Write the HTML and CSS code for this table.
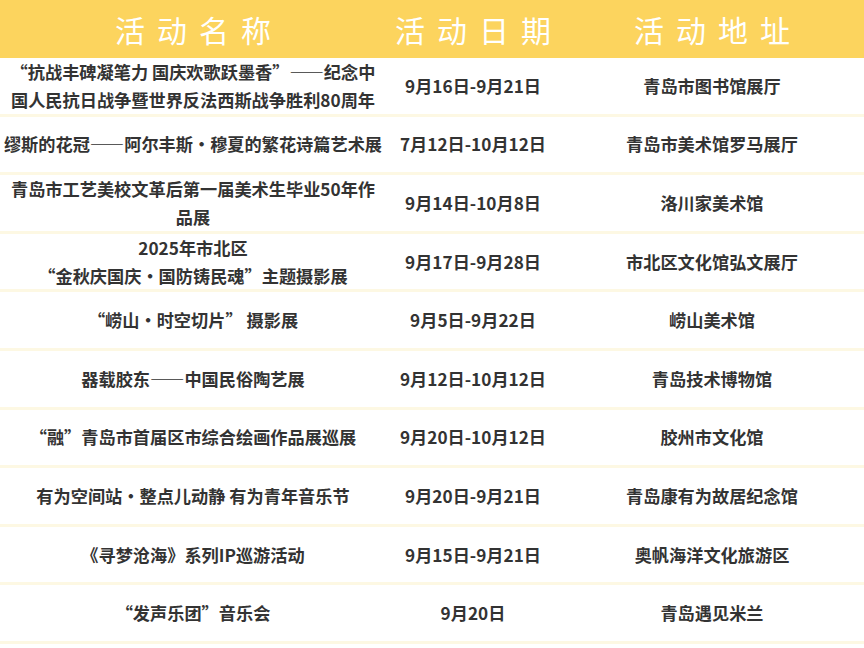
FILE: index.html
```html
<!DOCTYPE html>
<html lang="zh-CN">
<head>
<meta charset="utf-8">
<link rel="stylesheet" href="styles.css">
</head>
<body>
<div class="table">
  <div class="row head">
    <div class="cell"><span class="ht">活动名称</span></div>
    <div class="cell"><span class="ht">活动日期</span></div>
    <div class="cell"><span class="ht">活动地址</span></div>
  </div>
  <div class="row">
    <div class="cell">“抗战丰碑凝笔力 国庆欢歌跃墨香”——纪念中国人民抗日战争暨世界反法西斯战争胜利80周年</div>
    <div class="cell">9月16日-9月21日</div>
    <div class="cell">青岛市图书馆展厅</div>
  </div>
  <div class="row">
    <div class="cell">缪斯的花冠——阿尔丰斯・穆夏的繁花诗篇艺术展</div>
    <div class="cell">7月12日-10月12日</div>
    <div class="cell">青岛市美术馆罗马展厅</div>
  </div>
  <div class="row">
    <div class="cell">青岛市工艺美校文革后第一届美术生毕业50年作<br>品展</div>
    <div class="cell">9月14日-10月8日</div>
    <div class="cell">洛川家美术馆</div>
  </div>
  <div class="row">
    <div class="cell">2025年市北区<br>“金秋庆国庆・国防铸民魂”主题摄影展</div>
    <div class="cell">9月17日-9月28日</div>
    <div class="cell">市北区文化馆弘文展厅</div>
  </div>
  <div class="row">
    <div class="cell">“崂山・时空切片” 摄影展</div>
    <div class="cell">9月5日-9月22日</div>
    <div class="cell">崂山美术馆</div>
  </div>
  <div class="row">
    <div class="cell">器载胶东——中国民俗陶艺展</div>
    <div class="cell">9月12日-10月12日</div>
    <div class="cell">青岛技术博物馆</div>
  </div>
  <div class="row">
    <div class="cell">“融”青岛市首届区市综合绘画作品展巡展</div>
    <div class="cell">9月20日-10月12日</div>
    <div class="cell">胶州市文化馆</div>
  </div>
  <div class="row">
    <div class="cell">有为空间站・整点儿动静 有为青年音乐节</div>
    <div class="cell">9月20日-9月21日</div>
    <div class="cell">青岛康有为故居纪念馆</div>
  </div>
  <div class="row">
    <div class="cell">《寻梦沧海》系列IP巡游活动</div>
    <div class="cell">9月15日-9月21日</div>
    <div class="cell">奥帆海洋文化旅游区</div>
  </div>
  <div class="row">
    <div class="cell">“发声乐团”音乐会</div>
    <div class="cell">9月20日</div>
    <div class="cell">青岛遇见米兰</div>
  </div>
</div>
</body>
</html>
```

FILE: styles.css
```css
html, body {
  margin: 0;
  padding: 0;
  background: #ffffff;
}
body {
  font-family: "Noto Sans CJK SC", "Noto Sans", sans-serif;
  color: #333333;
}
.table {
  width: 864px;
}
.row {
  display: grid;
  grid-template-columns: 386px 174px 1fr;
  height: 58.6px;
  box-sizing: border-box;
  border-bottom: 3px solid #fdf8e3;
}
.row.head {
  height: 58px;
  background: #fcd45e;
  border-bottom: none;
}
.cell {
  display: flex;
  align-items: center;
  justify-content: center;
  text-align: center;
  font-size: 17.2px;
  font-weight: 700;
  line-height: 28px;
  padding: 0 4px;
}
.row .cell:first-child {
  padding: 0 2px;
}
.head .cell {
  padding: 0;
}
.ht {
  color: #ffffff;
  font-size: 30px;
  font-weight: 400;
  letter-spacing: 12px;
  margin-right: -12px;
  line-height: 40px;
}
```
